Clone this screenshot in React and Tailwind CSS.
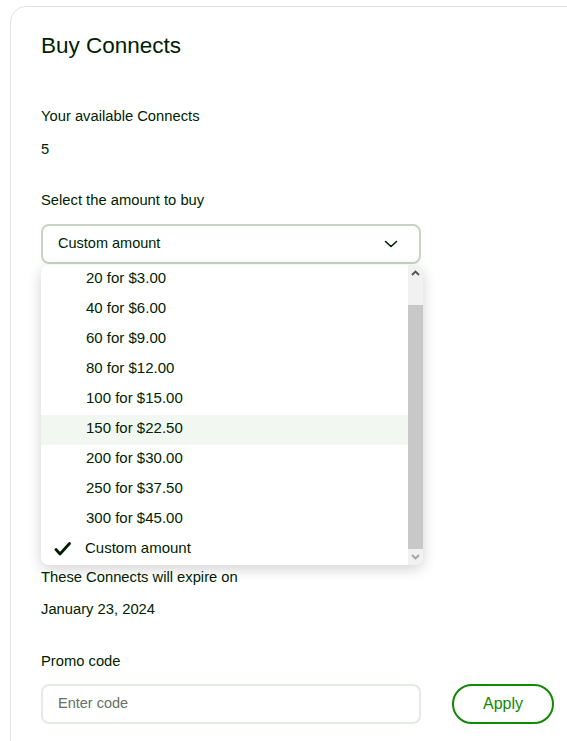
import React from "react";

const options = [
  "20 for $3.00",
  "40 for $6.00",
  "60 for $9.00",
  "80 for $12.00",
  "100 for $15.00",
  "150 for $22.50",
  "200 for $30.00",
  "250 for $37.50",
  "300 for $45.00",
  "Custom amount",
];

export default function App() {
  return (
    <div
      className="w-[567px] h-[741px] overflow-hidden bg-white text-[#001e00]"
      style={{ fontFamily: '"Liberation Sans", Arial, sans-serif' }}
    >
      <div className="ml-[10px] mt-[6px] w-[600px] h-[800px] border border-[#dfe6df] rounded-tl-[16px] pl-[30px] pt-[23px]">
        <h1 className="text-[22.5px] leading-[32px] font-normal">Buy Connects</h1>

        <div className="mt-[44px] text-[14.75px] leading-[20px]">Your available Connects</div>
        <div className="mt-[13px] text-[14.75px] leading-[20px]">5</div>

        <div className="mt-[31px] text-[14.75px] leading-[20px]">Select the amount to buy</div>

        <div className="relative mt-[14px] w-[380px]">
          <div className="h-[40px] border-2 border-[#c7d4c4] rounded-lg flex items-center justify-between pl-[15px] pr-[20px]">
            <span className="text-[14.5px]">Custom amount</span>
            <svg width="16" height="16" viewBox="0 0 16 16" fill="none">
              <path d="M2.5 5.5 L8 10.5 L13.5 5.5" stroke="#001e00" strokeWidth="1.6" strokeLinecap="round" strokeLinejoin="round" />
            </svg>
          </div>

          <div className="absolute left-0 top-[41px] w-[382px] h-[300px] bg-white rounded-lg shadow-[0_4px_14px_rgba(0,0,0,0.18)] overflow-hidden flex z-10">
            <div className="flex-1 flex flex-col">
              {options.map((o, i) => (
                <div
                  key={o}
                  className={
                    "h-[30px] flex items-center text-[15px] relative pb-[3px] " +
                    (i === 5 ? "bg-[#f2f7f2]" : "")
                  }
                >
                  {i === 9 && (
                    <svg className="absolute left-[13px] top-[7px]" width="17" height="14" viewBox="0 0 17 14" fill="none">
                      <path d="M2 7.5 L6 12 L15.5 1.5" stroke="#001e00" strokeWidth="2.8" strokeLinecap="round" strokeLinejoin="round" />
                    </svg>
                  )}
                  <span className={i === 9 ? "pl-[44px]" : "pl-[45px]"}>{o}</span>
                </div>
              ))}
            </div>
            <div className="w-[15px] flex flex-col bg-[#f1f1f1]">
              <div className="h-[16px] flex items-center justify-center">
                <svg width="9" height="6" viewBox="0 0 9 6">
                  <path d="M1 5 L4.5 1.5 L8 5" stroke="#505050" strokeWidth="1.8" fill="none" />
                </svg>
              </div>
              <div className="h-[24px]" />
              <div className="flex-1 bg-[#c8c8c8]" />
              <div className="h-[16px] flex items-center justify-center">
                <svg width="9" height="6" viewBox="0 0 9 6">
                  <path d="M1 1 L4.5 4.5 L8 1" stroke="#a3a3a3" strokeWidth="1.8" fill="none" />
                </svg>
              </div>
            </div>
          </div>
        </div>

        <div className="mt-[303px] text-[14.75px] leading-[20px]">These Connects will expire on</div>
        <div className="mt-[12px] text-[14.75px] leading-[20px]">January 23, 2024</div>

        <div className="mt-[32px] text-[14.75px] leading-[20px]">Promo code</div>
        <div className="mt-[13px] flex items-center gap-[31px]">
          <div className="w-[380px] h-[40px] border-2 border-[#e4ebe4] rounded-lg flex items-center pl-[15px]">
            <span className="text-[14.5px] text-[#676f67]">Enter code</span>
          </div>
          <button className="w-[102px] h-[40px] border-2 border-[#108a00] rounded-full text-[#108a00] text-base font-medium flex items-center justify-center">
            Apply
          </button>
        </div>
      </div>
    </div>
  );
}
